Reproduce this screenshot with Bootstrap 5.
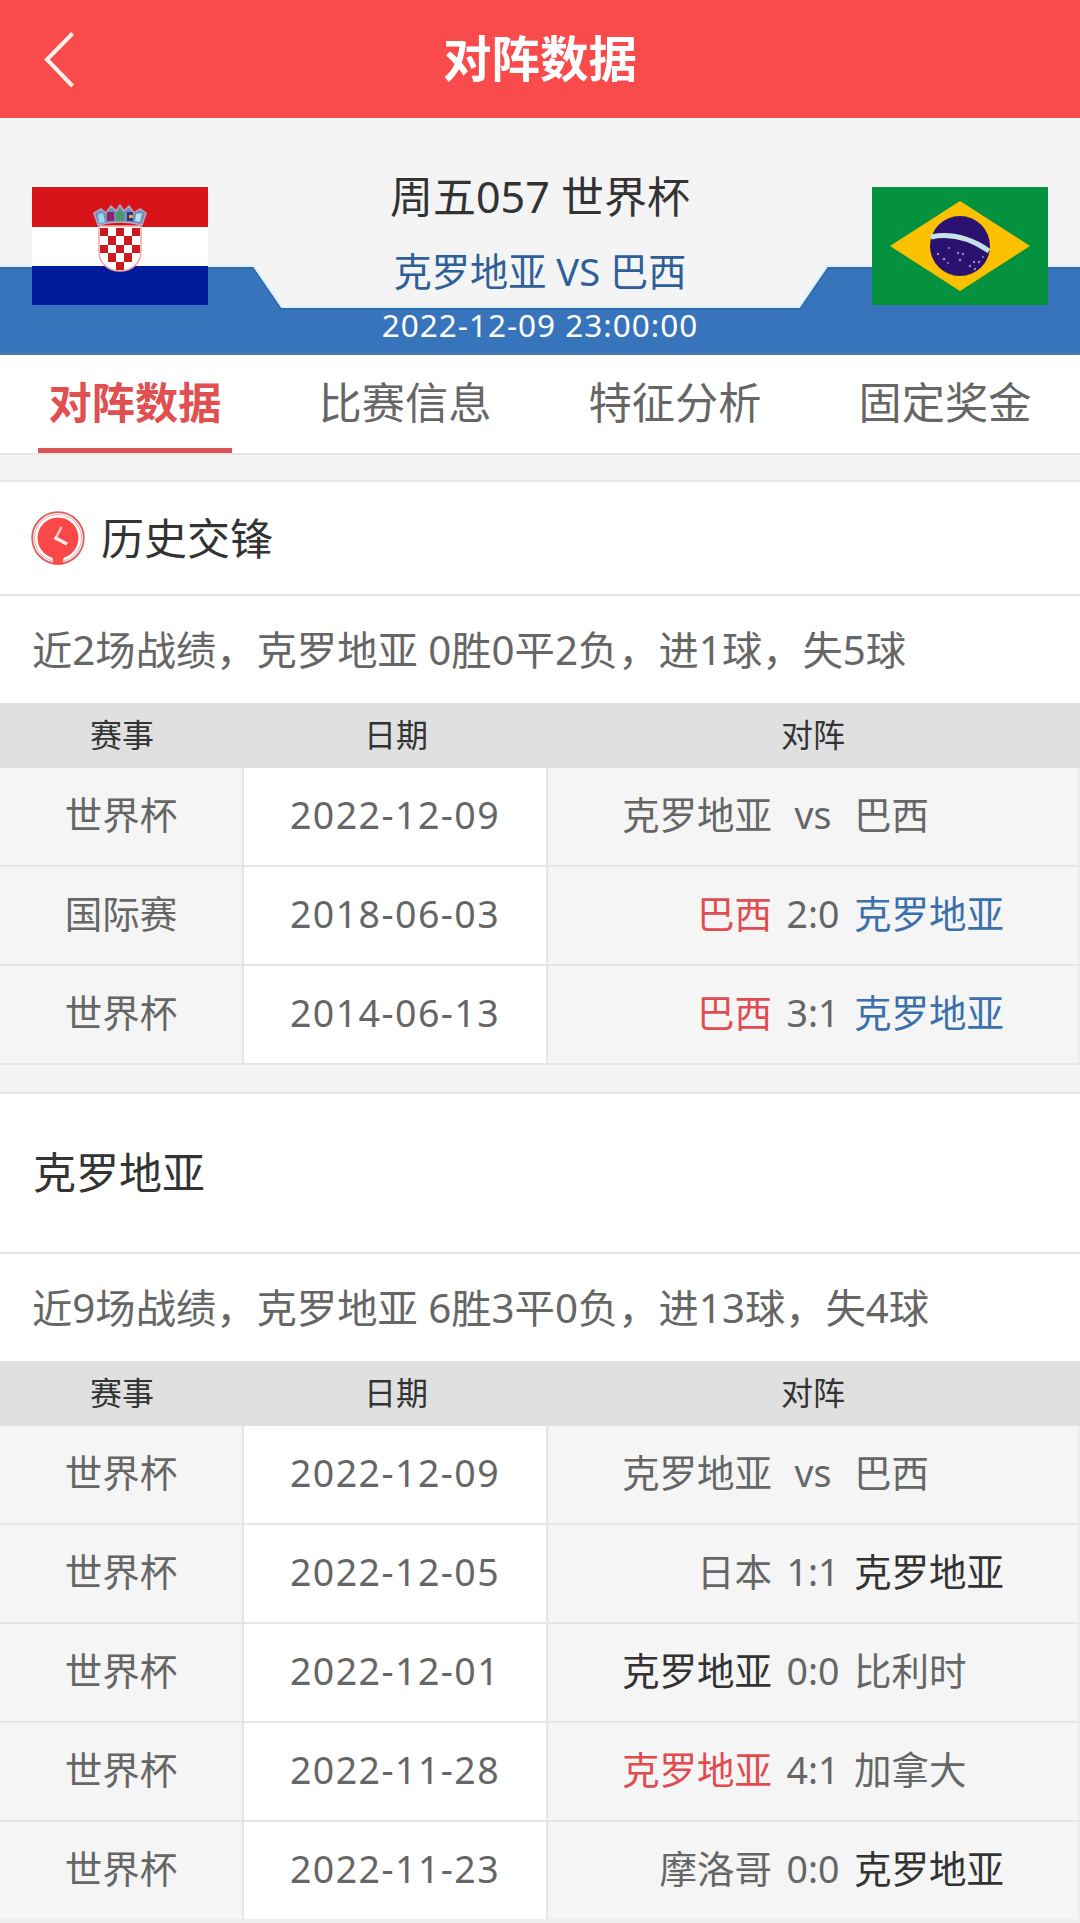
<!DOCTYPE html>
<html lang="zh-CN">
<head>
<meta charset="utf-8">
<meta name="viewport" content="width=device-width, initial-scale=1">
<title>对阵数据</title>
<link href="https://cdn.jsdelivr.net/npm/bootstrap@5.3.0/dist/css/bootstrap.min.css" rel="stylesheet">
<style>
body{font-family:"Noto Sans","Noto Sans CJK SC",sans-serif;background:#f4f4f4;color:#666;overflow:hidden;height:1923px}
.topbar{height:118px;background:#f94b4b;padding-bottom:3px}
.topbar h1{font-size:48.5px;line-height:60px;color:#fff}
.back-link{left:43px;top:31px}
.hero{height:237px;background:#f4f4f4}
.hero-shape{left:0;top:0}
.hero-row{padding:69px 32px 0}
.hero-mid{margin-top:-20px}
.match-no{font-size:43px;line-height:60px;color:#333}
.match-vs{font-size:38.2px;line-height:50px;color:#2f5f98;margin-top:19px}
.match-time{font-size:31.5px;line-height:40px;color:#fff;margin-top:9px;letter-spacing:1px}
.tabs-bar{height:100px;border-bottom:2px solid #e6e6e6}
.tabs-bar .nav-link{width:194px;height:98px;padding:0 0 5px;font-size:43.2px;line-height:96px;color:#666;border-bottom:5px solid transparent;white-space:nowrap;border-radius:0}
.tabs-bar .nav-link.active{color:#e05050;border-bottom-color:#da5454;font-weight:700}
.panel{border-top:2px solid #e6e6e6}
.panel-title{height:114px;border-bottom:2px solid #e6e6e6;padding:2px 32px 0 31px;font-size:43px;color:#333;line-height:60px}
.panel-title.tall{height:160px;padding-top:0;padding-left:33px}
.summary{height:107px;padding:0 32px 0 32px;font-size:40.3px;line-height:108px;white-space:pre}
.games{table-layout:fixed;border-collapse:separate;border-spacing:0;color:#666;text-align:center}
.games th{height:65px;padding:0;background:#e0e0e0;border:0;font-size:32px;line-height:63px;color:#333;font-weight:400;vertical-align:top}
.games th:last-child{padding-right:2px}
.games td{height:99px;padding:0;border:0;border-bottom:2px solid #e6e6e6;border-right:2px solid #e6e6e6;background:#f5f5f5;font-size:37.5px;line-height:94px;color:#666;vertical-align:top;white-space:nowrap}
.games td:last-child{border-right-color:#ececec}
.games td:nth-child(2){background:#fff;letter-spacing:1.45px}
.games.cut-off tr:last-child td{height:97px;border-bottom:0}
.bottom-strip{height:8px;background:#eee}
.c-event{width:244px}.c-date{width:304px}
.score{width:82px;flex:none}
.win{color:#e04c50}.lose{color:#3a70ab}.even{color:#333}
</style>
</head>
<body>
<header class="topbar position-relative d-flex align-items-center justify-content-center">
  <a href="#" class="back-link position-absolute" aria-label="返回"><svg class="d-block" width="32" height="58" viewBox="0 0 32 58" fill="none" stroke="#fff0ea" stroke-width="4"><path d="M29.500 2.500L4 28.500L29.500 55"/></svg></a>
  <h1 class="fw-bold m-0">对阵数据</h1>
</header>

<section class="hero position-relative">
  <svg class="hero-shape position-absolute" width="1080" height="237" viewBox="0 0 1080 237"><path d="M0 150H253L281 191H800L828 150H1080V237H0Z" fill="#3874bc"/><path d="M0 150H253L281 191H800L828 150H1080" fill="none" stroke="#2f6cae" stroke-width="2"/><path d="M0 148H254L282 189H799L827 148H1080" fill="none" stroke="#dcf0fb" stroke-width="2"/><path d="M0 236H1080" stroke="#5077a2" stroke-width="2"/></svg>
  <div class="hero-row position-relative d-flex justify-content-between align-items-start">
    <svg width="176" height="118" viewBox="0 0 176 118">
      <path fill="#d71518" d="M0 0h176v40H0z"/><path fill="#fff" d="M0 40h176v39H0z"/><path fill="#001c9c" d="M0 79h176v39H0z"/>
      <path d="M67 39H109V64C109 77 99 84 88 84S67 77 67 64Z" fill="#fff" stroke="#f3a3a8" stroke-width="1.500"/>
      <path fill="#c91a20" d="M68 41h8v8h-8zM84 41h8v8h-8zM100 41h8v8h-8zM76 49h8v9h-8zM92 49h8v9h-8zM68 58h8v8h-8zM84 58h8v8h-8zM100 58h8v8h-8zM76 66h8v9h-8zM92 66h8v9h-8zM84 75h8v8h-8z"/>
      <path d="M66 38L62 26L69 22L74 26L79 19L84 24L88 18L92 24L97 19L102 26L108 22L114 26L110 38Q88 32 66 38Z" fill="#6d8fc2" stroke="#b7a6c6" stroke-width="1.500"/>
      <path d="M66 27l5-1 2 9-6 1z" fill="#9fd4ed"/><path d="M75 25h7v9h-7z" fill="#8c2367"/><path d="M84 26l4-4 4 4v8h-8z" fill="#4b9a68"/><path d="M95 25h6v9h-6z" fill="#3b3479"/><path d="M97 28h4v3h-4z" fill="#d3b33e"/><path d="M104 27l6-1-2 9-5-1z" fill="#b7e0ee"/>
    </svg>
    <div class="hero-mid text-center">
      <div class="match-no">周五057 世界杯</div>
      <div class="match-vs">克罗地亚 VS 巴西</div>
      <div class="match-time">2022-12-09 23:00:00</div>
    </div>
    <svg width="176" height="118" viewBox="0 0 176 118">
      <path fill="#05923e" d="M0 0h176v118H0z"/><path fill="#fbc000" d="M18 59L88 14L158 59L88 104Z"/>
      <circle cx="88" cy="59" r="30" fill="#2b1270"/><path d="M59 50Q88 44 117 64" fill="none" stroke="#c5e3e6" stroke-width="5"/>
      <g fill="#9b8bc0"><circle cx="66" cy="67" r="1.200"/><circle cx="72" cy="72" r="1.300"/><circle cx="77" cy="61" r="1"/><circle cx="76" cy="76" r="1"/><circle cx="86" cy="66" r="1.200"/><circle cx="91" cy="67" r="1.200"/><circle cx="88" cy="73" r="1.300"/><circle cx="98" cy="79" r="1.200"/><circle cx="102" cy="75" r="1.200"/><circle cx="107" cy="75" r="1.200"/><circle cx="103" cy="82" r="1.200"/><circle cx="111" cy="70" r="1"/></g>
    </svg>
  </div>
</section>

<nav class="tabs-bar nav bg-white">
  <div class="col-3 d-flex justify-content-center"><a class="nav-link active text-center" href="#">对阵数据</a></div>
  <div class="col-3 d-flex justify-content-center"><a class="nav-link text-center" href="#">比赛信息</a></div>
  <div class="col-3 d-flex justify-content-center"><a class="nav-link text-center" href="#">特征分析</a></div>
  <div class="col-3 d-flex justify-content-center"><a class="nav-link text-center" href="#">固定奖金</a></div>
</nav>

<section class="panel bg-white" style="margin-top:25px">
  <div class="panel-title d-flex align-items-center">
    <svg class="me-3" width="54" height="56" viewBox="0 0 54 56"><circle cx="27" cy="27" r="25.800" fill="#fff" stroke="#df5c62" stroke-width="1.800"/><circle cx="27" cy="27" r="23.500" fill="none" stroke="#f8a5a2" stroke-width="1"/><circle cx="27" cy="27" r="20.500" fill="#fa4848"/><path d="M20 45Q23 48 22 53.500H32Q31 48 34 45Z" fill="#fa4848"/><path d="M30.500 16L24.500 27.500" fill="none" stroke="#ffc9c4" stroke-width="2.500"/><path d="M23.500 26.500L36 33" fill="none" stroke="#fff0ec" stroke-width="3.500"/></svg>
    <span>历史交锋</span>
  </div>
  <div class="summary">近2场战绩，克罗地亚 0胜0平2负，进1球，失5球</div>
  <table class="games w-100 mb-0">
    <colgroup><col class="c-event"><col class="c-date"><col></colgroup>
    <thead><tr><th>赛事</th><th>日期</th><th>对阵</th></tr></thead>
    <tbody>
      <tr><td>世界杯</td><td>2022-12-09</td><td><div class="d-flex"><span class="col text-end">克罗地亚</span><span class="score">vs</span><span class="col text-start">巴西</span></div></td></tr>
      <tr><td>国际赛</td><td>2018-06-03</td><td><div class="d-flex"><span class="col text-end win">巴西</span><span class="score">2:0</span><span class="col text-start lose">克罗地亚</span></div></td></tr>
      <tr><td>世界杯</td><td>2014-06-13</td><td><div class="d-flex"><span class="col text-end win">巴西</span><span class="score">3:1</span><span class="col text-start lose">克罗地亚</span></div></td></tr>
    </tbody>
  </table>
</section>

<section class="panel bg-white" style="margin-top:27px">
  <div class="panel-title tall d-flex align-items-center"><span>克罗地亚</span></div>
  <div class="summary">近9场战绩，克罗地亚 6胜3平0负，进13球，失4球</div>
  <table class="games cut-off w-100 mb-0">
    <colgroup><col class="c-event"><col class="c-date"><col></colgroup>
    <thead><tr><th>赛事</th><th>日期</th><th>对阵</th></tr></thead>
    <tbody>
      <tr><td>世界杯</td><td>2022-12-09</td><td><div class="d-flex"><span class="col text-end">克罗地亚</span><span class="score">vs</span><span class="col text-start">巴西</span></div></td></tr>
      <tr><td>世界杯</td><td>2022-12-05</td><td><div class="d-flex"><span class="col text-end">日本</span><span class="score">1:1</span><span class="col text-start even">克罗地亚</span></div></td></tr>
      <tr><td>世界杯</td><td>2022-12-01</td><td><div class="d-flex"><span class="col text-end even">克罗地亚</span><span class="score">0:0</span><span class="col text-start">比利时</span></div></td></tr>
      <tr><td>世界杯</td><td>2022-11-28</td><td><div class="d-flex"><span class="col text-end win">克罗地亚</span><span class="score">4:1</span><span class="col text-start">加拿大</span></div></td></tr>
      <tr><td>世界杯</td><td>2022-11-23</td><td><div class="d-flex"><span class="col text-end">摩洛哥</span><span class="score">0:0</span><span class="col text-start even">克罗地亚</span></div></td></tr>
    </tbody>
  </table>
  <div class="bottom-strip"></div>
</section>
<script src="https://cdn.jsdelivr.net/npm/bootstrap@5.3.0/dist/js/bootstrap.bundle.min.js"></script>
</body>
</html>
